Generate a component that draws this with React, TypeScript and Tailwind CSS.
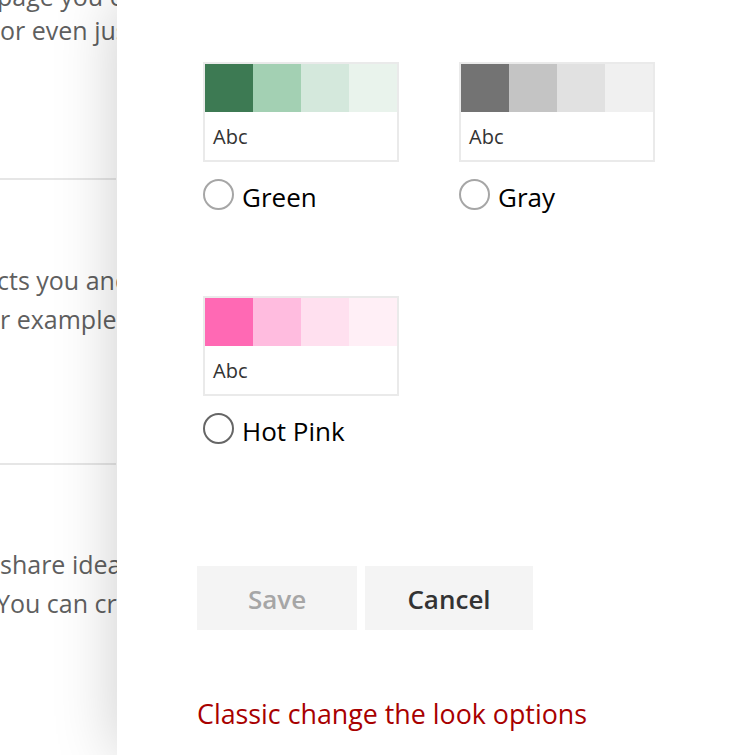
import React from "react";

type Opt = { name: string; swatches: string[]; dark?: boolean };

const options: Opt[] = [
  { name: "Green", swatches: ["bg-[#3d7a53]", "bg-[#a3d0b3]", "bg-[#d4e8dc]", "bg-[#e9f3ec]"] },
  { name: "Gray", swatches: ["bg-[#737373]", "bg-[#c4c4c4]", "bg-[#e1e1e1]", "bg-[#f0f0f0]"] },
  { name: "Hot Pink", swatches: ["bg-[#ff69b4]", "bg-[#ffbcdf]", "bg-[#ffe0ef]", "bg-[#ffeff6]"], dark: true },
];

function Option({ o }: { o: Opt }) {
  return (
    <div>
      <div className="w-[196px] border-2 border-[#eaeaea] bg-white">
        <div className="flex">
          {o.swatches.map((s, i) => (
            <div key={i} className={`h-[48px] w-[48px] ${s}`} />
          ))}
        </div>
        <div className="flex h-[48px] items-center pl-[8px] pt-[1px] text-[20px] text-[#333333]">Abc</div>
      </div>
      <div className="mt-[16px] flex h-[32px] items-center">
        <span
          className={
            o.dark
              ? "box-border h-[31px] w-[31px] shrink-0 rounded-full border-2 border-[#666666]"
              : "box-border h-[31px] w-[31px] shrink-0 rounded-full border-2 border-[#a6a6a6]"
          }
        />
        <span className="ml-[8px] mt-[6px] text-[26px] leading-[32px] text-black">{o.name}</span>
      </div>
    </div>
  );
}

export default function App() {
  return (
    <div
      className="relative h-[755px] w-full overflow-hidden bg-white"
      style={{ fontFamily: '"Open Sans", "Noto Sans", sans-serif' }}
    >
      {/* background page */}
      <div className="flex flex-col text-[25px] leading-[39px] text-[#5f5f5f] whitespace-nowrap">
        <div className="mt-[-23px] ml-[-3px]">page you can use</div>
        <div className="mt-[-5px] ml-[0px]">or even just</div>
        <div className="mt-[128px] h-[2px] w-[116px] bg-[#e6e6e6]" />
        <div className="mt-[81px] ml-[-3px]">cts you and</div>
        <div className="ml-[0px]">r example,</div>
        <div className="mt-[124px] h-[2px] w-[116px] bg-[#e6e6e6]" />
        <div className="mt-[80px] ml-[0px]">share ideas</div>
        <div className="ml-[-4px]">You can create</div>
      </div>

      {/* panel */}
      <div className="absolute top-0 bottom-0 left-[117px] right-0 bg-white shadow-[0_0_60px_rgba(0,0,0,0.2)]">
        <div className="pl-[80px] pt-[62px]">
          <div className="ml-[6px] grid grid-cols-[196px_196px] gap-x-[60px] gap-y-[86px]">
            {options.map((o) => (
              <Option key={o.name} o={o} />
            ))}
          </div>
          <div className="mt-[122px] flex gap-[8px]">
            <button className="h-[64px] w-[160px] bg-[#f4f4f4] pt-[2px] text-[26px] font-semibold text-[#a6a6a6]">
              Save
            </button>
            <button className="h-[64px] w-[168px] bg-[#f4f4f4] pt-[2px] text-[26px] font-semibold text-[#333333]">
              Cancel
            </button>
          </div>
          <a className="mt-[64px] block text-[26.8px] leading-[40px] text-[#a80000]">
            Classic change the look options
          </a>
        </div>
      </div>
    </div>
  );
}
